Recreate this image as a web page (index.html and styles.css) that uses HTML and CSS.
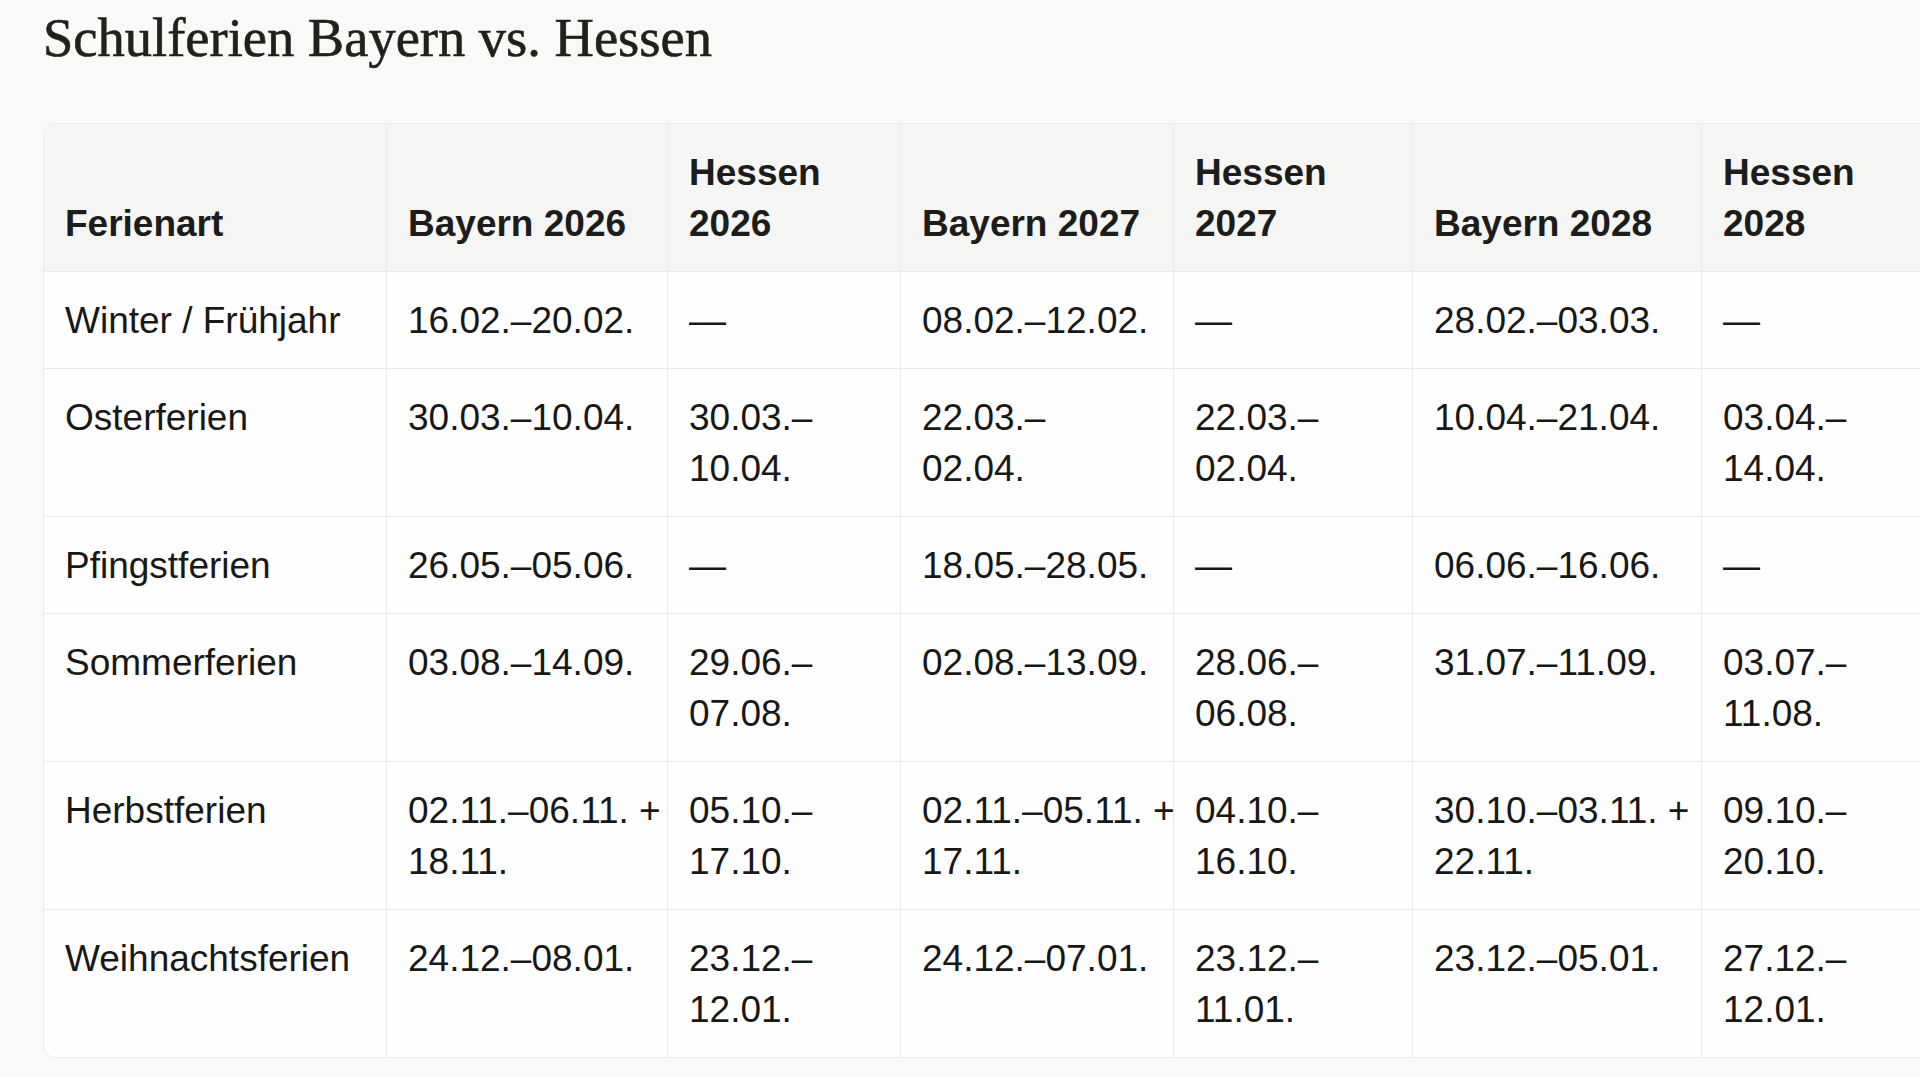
FILE: index.html
```html
<!DOCTYPE html>
<html lang="de">
<head>
<meta charset="utf-8">
<title>Schulferien Bayern vs. Hessen</title>
<link rel="stylesheet" href="styles.css">
</head>
<body>
<main class="page">
  <h1 class="title">Schulferien Bayern vs. Hessen</h1>
  <div class="table-wrap">
    <table class="holidays">
      <colgroup>
        <col class="c1"><col class="c2"><col class="c3"><col class="c4"><col class="c5"><col class="c6"><col class="c7">
      </colgroup>
      <thead>
        <tr>
          <th>Ferienart</th>
          <th>Bayern 2026</th>
          <th>Hessen<br>2026</th>
          <th>Bayern 2027</th>
          <th>Hessen<br>2027</th>
          <th>Bayern 2028</th>
          <th>Hessen<br>2028</th>
        </tr>
      </thead>
      <tbody>
        <tr>
          <td>Winter / Frühjahr</td>
          <td>16.02.–20.02.</td>
          <td>—</td>
          <td>08.02.–12.02.</td>
          <td>—</td>
          <td>28.02.–03.03.</td>
          <td>—</td>
        </tr>
        <tr>
          <td>Osterferien</td>
          <td>30.03.–10.04.</td>
          <td>30.03.–<br>10.04.</td>
          <td>22.03.–<br>02.04.</td>
          <td>22.03.–<br>02.04.</td>
          <td>10.04.–21.04.</td>
          <td>03.04.–<br>14.04.</td>
        </tr>
        <tr>
          <td>Pfingstferien</td>
          <td>26.05.–05.06.</td>
          <td>—</td>
          <td>18.05.–28.05.</td>
          <td>—</td>
          <td>06.06.–16.06.</td>
          <td>—</td>
        </tr>
        <tr>
          <td>Sommerferien</td>
          <td>03.08.–14.09.</td>
          <td>29.06.–<br>07.08.</td>
          <td>02.08.–13.09.</td>
          <td>28.06.–<br>06.08.</td>
          <td>31.07.–11.09.</td>
          <td>03.07.–<br>11.08.</td>
        </tr>
        <tr>
          <td>Herbstferien</td>
          <td>02.11.–06.11. +<br>18.11.</td>
          <td>05.10.–<br>17.10.</td>
          <td>02.11.–05.11. +<br>17.11.</td>
          <td>04.10.–<br>16.10.</td>
          <td>30.10.–03.11. +<br>22.11.</td>
          <td>09.10.–<br>20.10.</td>
        </tr>
        <tr>
          <td>Weihnachtsferien</td>
          <td>24.12.–08.01.</td>
          <td>23.12.–<br>12.01.</td>
          <td>24.12.–07.01.</td>
          <td>23.12.–<br>11.01.</td>
          <td>23.12.–05.01.</td>
          <td>27.12.–<br>12.01.</td>
        </tr>
      </tbody>
    </table>
  </div>
</main>
</body>
</html>
```

FILE: styles.css
```css
html, body {
  margin: 0;
  padding: 0;
  background: #faf9f7;
  overflow: hidden;
}

.page {
  padding: 8px 0 0 43px;
  width: 2000px;
}

.title {
  margin: 0 0 55px 0;
  font-family: "Liberation Serif", "Times New Roman", serif;
  font-weight: 400;
  font-size: 54.5px;
  line-height: 60px;
  color: #22201d;
  -webkit-text-stroke: 0.6px #22201d;
}

.table-wrap {
  width: 1899px;
  border: 1px solid #ebe9e5;
  border-radius: 12px;
  overflow: hidden;
  background: #fefefe;
}

.holidays {
  border-collapse: separate;
  border-spacing: 0;
  table-layout: fixed;
  width: 1897px;
  font-family: "Liberation Sans", Arial, sans-serif;
  font-size: 37px;
  line-height: 51px;
  color: #181817;
}

.c1 { width: 343px; }
.c2 { width: 281px; }
.c3 { width: 233px; }
.c4 { width: 273px; }
.c5 { width: 239px; }
.c6 { width: 289px; }
.c7 { width: 239px; }

.holidays th,
.holidays td {
  padding: 23px 10px 22px 21px;
  text-align: left;
  white-space: nowrap;
  border-right: 1px solid #ebeae7;
  border-bottom: 1px solid #ebeae7;
}

.holidays th {
  vertical-align: bottom;
  font-weight: 700;
  background: #f5f5f3;
  color: #1c1c1b;
}

.holidays td {
  vertical-align: top;
  font-weight: 400;
}

.holidays tr > :last-child {
  border-right: none;
}

.holidays tbody tr:last-child td {
  border-bottom: none;
}
```
